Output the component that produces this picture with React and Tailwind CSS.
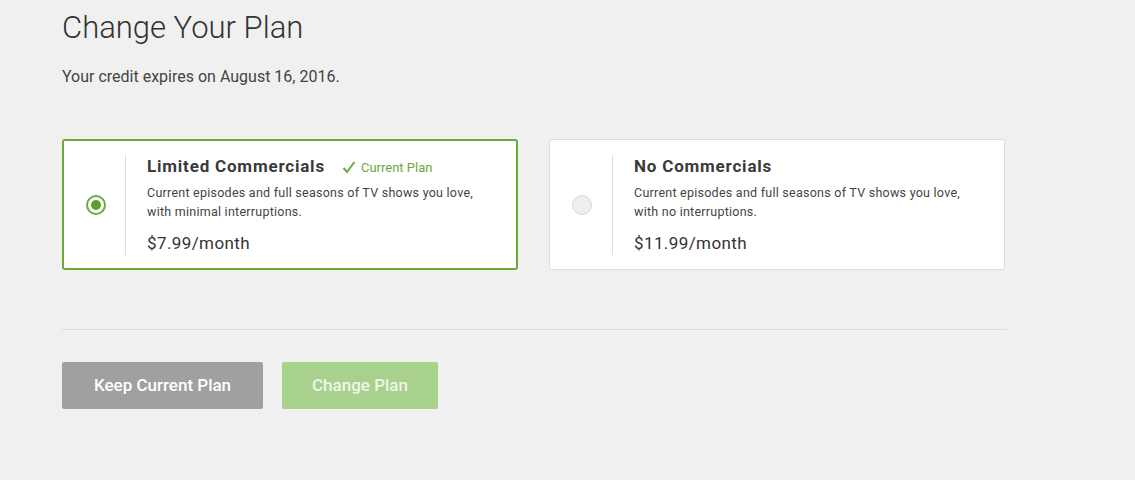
const PLANS = [
  {
    id: 'limited',
    name: 'Limited Commercials',
    desc: ['Current episodes and full seasons of TV shows you love,', 'with minimal interruptions.'],
    price: '$7.99',
    current: true,
  },
  {
    id: 'none',
    name: 'No Commercials',
    desc: ['Current episodes and full seasons of TV shows you love,', 'with no interruptions.'],
    price: '$11.99',
    current: false,
  },
]

function PlanCard({ plan, selected }) {
  return (
    <div
      className={
        selected
          ? 'w-[456px] h-[131px] bg-white rounded-[3px] border-2 border-[#6aaa3a] flex items-center'
          : 'w-[456px] h-[131px] bg-white rounded-[3px] border border-[#dcdcdc] flex items-center'
      }
    >
      <div className={selected ? 'w-[61px] flex justify-center pl-[3px]' : 'w-[62px] flex justify-center pl-[2px]'}>
        {selected ? (
          <span className="w-[20px] h-[20px] rounded-full border-2 border-[#6aaa3a] flex items-center justify-center">
            <span className="w-[10px] h-[10px] rounded-full bg-[#5e9f2e]" />
          </span>
        ) : (
          <span className="w-[20px] h-[20px] rounded-full border border-[#d8d8d8] bg-[#efefef]" />
        )}
      </div>
      <div className="h-[100px] w-px bg-[#dedede]" />
      <div className="pl-[21px] pt-[1px]">
        <div className="flex items-baseline">
          <span className="text-[17px] font-bold text-[#3a3a3a] tracking-[0.8px]">{plan.name}</span>
          {plan.current && (
            <span className="ml-[17px] flex items-baseline text-[13px] text-[#6aaa3a]">
              <svg width="14" height="13" viewBox="0 0 14 13" className="mr-[5px] self-center">
                <path d="M1.5 7 L5 11 L12.5 1" fill="none" stroke="#6aaa3a" strokeWidth="2" />
              </svg>
              Current Plan
            </span>
          )}
        </div>
        <div className="mt-[3px] text-[12.5px] leading-[19px] text-[#444] tracking-[0.25px]">
          {plan.desc.map((d) => (
            <div key={d}>{d}</div>
          ))}
        </div>
        <div className="mt-[10px] text-[17px] font-normal text-[#333] tracking-[0.4px]">{plan.price}/month</div>
      </div>
    </div>
  )
}

export default function App() {
  return (
    <div className="min-h-[480px] bg-[#f0f0f0] font-['Roboto',sans-serif] pl-[62px] pt-[8px]">
      <h1 className="text-[31px] font-light text-[#333] leading-[40px]">Change Your Plan</h1>
      <p className="mt-[17px] text-[16px] text-[#444]">Your credit expires on August 16, 2016.</p>
      <div className="mt-[50px] flex gap-[31px]">
        {PLANS.map((p) => (
          <PlanCard key={p.id} plan={p} selected={p.current} />
        ))}
      </div>
      <div className="mt-[59px] w-[945px] h-px bg-[#dcdcdc]" />
      <div className="mt-[32px] flex gap-[19px]">
        <button className="w-[201px] h-[47px] rounded-[2px] bg-[#a0a0a0] text-white text-[17px] font-medium">
          Keep Current Plan
        </button>
        <button className="w-[156px] h-[47px] rounded-[2px] bg-[#a9d18e] text-[#eef7e7] text-[17px] font-medium">
          Change Plan
        </button>
      </div>
    </div>
  )
}
